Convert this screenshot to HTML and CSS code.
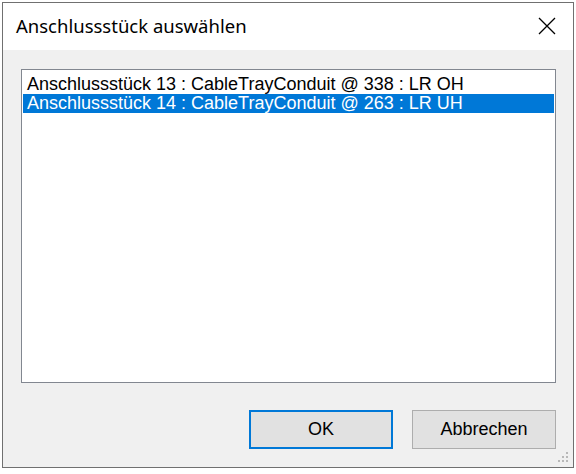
FILE: index.html
```html
<!DOCTYPE html>
<html lang="de">
<head>
  <meta charset="UTF-8">
  <title>Anschlussstück auswählen</title>
  <link rel="stylesheet" href="styles.css">
</head>
<body>

  <div class="window">
    <div class="titlebar">
      <span class="title">Anschlussstück auswählen</span>
      <svg class="close" width="18" height="18" viewBox="0 0 18 18">
        <path d="M1 1 L17 17 M17 1 L1 17" stroke="#000" stroke-width="1.3" fill="none"/>
      </svg>
    </div>

    <div class="client">
      <ul class="listbox">
        <li>Anschlussstück 13 : CableTrayConduit @ 338 : LR OH</li>
        <li class="selected">Anschlussstück 14 : CableTrayConduit @ 263 : LR UH</li>
      </ul>

      <div class="buttons">
        <button class="btn default">OK</button>
        <button class="btn">Abbrechen</button>
      </div>

      <svg class="grip" width="12" height="12" viewBox="0 0 12 12">
        <rect x="8" y="0" width="2" height="2" fill="#b8b8b8"/>
        <rect x="4" y="4" width="2" height="2" fill="#b8b8b8"/>
        <rect x="8" y="4" width="2" height="2" fill="#b8b8b8"/>
        <rect x="0" y="8" width="2" height="2" fill="#b8b8b8"/>
        <rect x="4" y="8" width="2" height="2" fill="#b8b8b8"/>
        <rect x="8" y="8" width="2" height="2" fill="#b8b8b8"/>
      </svg>
    </div>
  </div>

</body>
</html>
```

FILE: styles.css
```css
body {
  margin: 0;
  background: #ffffff;
  font-family: "Liberation Sans", Arial, sans-serif;
}

.window {
  margin: 2px 2px 0 2px;
  width: 570px;
  height: 464px;
  border: 1px solid #707070;
  display: flex;
  flex-direction: column;
  background: #f0f0f0;
}

.titlebar {
  height: 47px;
  background: #ffffff;
  display: flex;
  align-items: center;
  justify-content: space-between;
  padding: 0 17px 0 13px;
}

.title {
  font-family: "Noto Sans", "Open Sans", sans-serif;
  font-size: 18.5px;
  color: #000;
  margin-top: -2px;
}

.close {
  margin-top: -1px;
}

.client {
  flex: 1;
  position: relative;
  padding: 19px 17px 0 18px;
  display: flex;
  flex-direction: column;
}

.listbox {
  list-style: none;
  margin: 0;
  padding: 5px 1px 1px 1px;
  height: 306px;
  background: #ffffff;
  border: 1px solid #828790;
  font-size: 18px;
  color: #000;
}

.listbox li {
  height: 19px;
  line-height: 19px;
  padding-left: 4px;
  white-space: nowrap;
}

.listbox li.selected {
  background: #0078d7;
  color: #ffffff;
}

.buttons {
  display: flex;
  justify-content: flex-end;
  gap: 19px;
  margin-top: 27px;
}

.btn {
  width: 144px;
  height: 39px;
  background: #e1e1e1;
  border: 1px solid #adadad;
  font-family: "Liberation Sans", Arial, sans-serif;
  font-size: 18px;
  color: #000;
  padding: 0;
}

.btn.default {
  border: 2px solid #0078d7;
}

.grip {
  position: absolute;
  right: 3px;
  bottom: 3px;
}
```
